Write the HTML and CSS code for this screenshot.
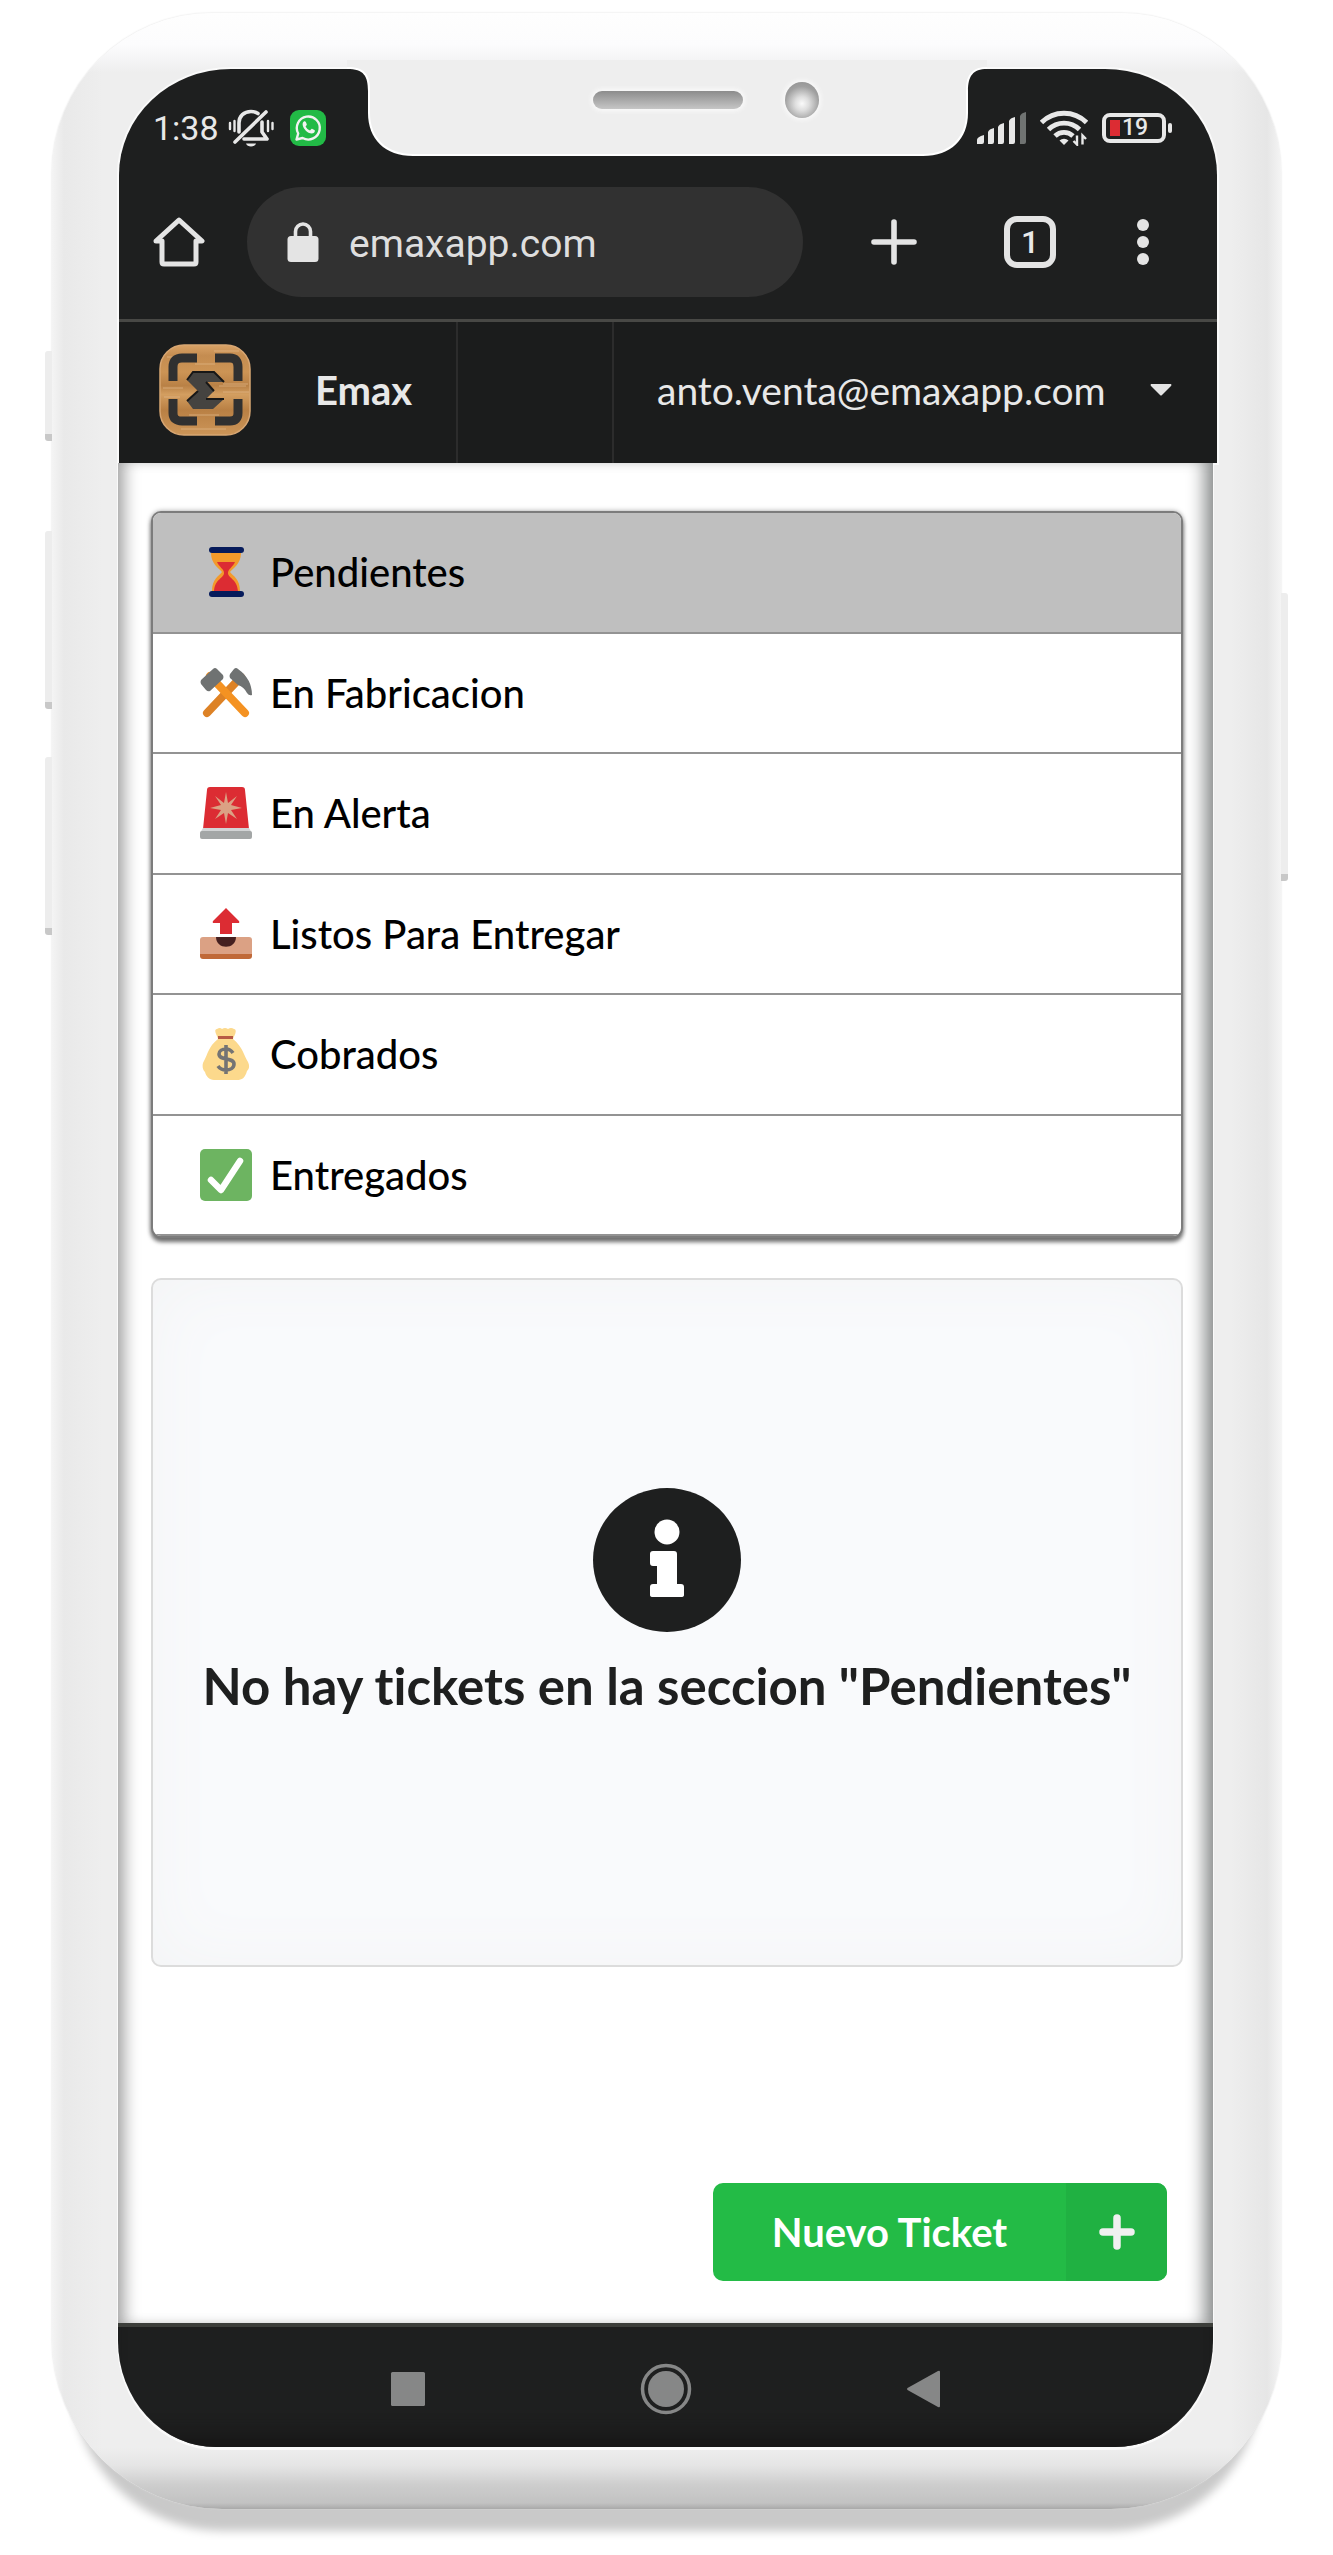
FILE: index.html
```html
<!DOCTYPE html>
<html lang="es">
<head>
<meta charset="utf-8">
<meta name="viewport" content="width=device-width, initial-scale=1">
<title>Emax</title>
<link rel="stylesheet" href="styles.css">
</head>
<body>
<div class="stage">
<div class="phone">
  <span class="side-key key-a"></span>
  <span class="side-key key-b"></span>
  <span class="side-key key-c"></span>
  <span class="side-key key-d"></span>
  <div class="screen">
    <div class="chrome">
      <div class="status">
        <div class="status-group">
          <span class="clock">1:38</span>
          <svg class="ic-bell" width="46" height="40" viewBox="0 0 46 40" fill="none" stroke="#e8e8e8" stroke-width="3.6" stroke-linecap="round" stroke-linejoin="round"><path d="M38 4 7 34"/><path d="M11 24V15C11 8 16 3.500 23 3.500c2.500 0 5 .6 7 2"/><path d="M34 14v10l5 7H16"/><path d="M2 15v6M6.500 13v10M40 13v10M44.500 15v6" stroke-width="2.400"/><path d="M18 35.500h10c-1 4-9 4-10 0z" fill="#e8e8e8" stroke="none"/></svg>
          <svg class="ic-wa" width="36" height="36" viewBox="0 0 36 36"><rect width="36" height="36" rx="9" fill="#22ba46"/><path d="M6.500 29.500l1.700-6A11.500 11.500 0 1 1 12.600 28z" fill="none" stroke="#f2f2f2" stroke-width="2.400" stroke-linejoin="round"/><path d="M13.600 11.800c.8-.8 1.800-.6 2.200.2l1 2.300c.2.600-.9 1.700-1.200 2.100 1 2 2.400 3.200 4.400 4.100.7-.6 1.300-1.900 2-1.700l2.400 1.200c.9.500.4 2-.4 2.700-2.200 1.900-6 .1-8.400-2.300-2.500-2.500-4.100-6.600-2-8.600z" fill="#f2f2f2"/></svg>
        </div>
        <div class="status-group">
          <svg width="50" height="32" viewBox="0 0 50 32" fill="#e8e8e8"><path d="M1 32v-4q0-3 7-5v7q0 2-2 2zM12 32V20q1-3 6-4v14q0 2-2 2zM22 32V15q1-3 6-4v19q0 2-2 2zM33 32V9q1-3 6-4v25q0 2-2 2z"/><path d="M44 32V4q1-3 6-4v30q0 2-2 2z" fill="#707372"/></svg>
          <svg class="ic-wifi" width="48" height="36" viewBox="0 0 48 36" fill="none" stroke="#e8e8e8" stroke-width="4.800"><path d="M1.500 12.500a32 32 0 0 1 45 0M8.500 19.500a22 22 0 0 1 31 0M15 26a13 13 0 0 1 18 0"/><path d="M24 35l-4.500-4.500a6.500 6.500 0 0 1 9 0z" fill="#e8e8e8" stroke="none"/><path d="M37 25.500v9l-3.500-3.500M42.500 34.500v-9l3.500 3.500" stroke-width="2.400"/></svg>
          <span class="battery"><span class="battery-fill"></span>19</span>
        </div>
      </div>
      <div class="browser">
        <button class="icon-btn" aria-label="Inicio"><svg width="52" height="52" viewBox="0 0 52 52" fill="none" stroke="#e4e4e4" stroke-width="5" stroke-linejoin="round" stroke-linecap="round"><path d="M3 25 26 4l23 21h-6v21q0 2-2 2H11q-2 0-2-2V25z"/></svg></button>
        <a class="address" href="#"><svg width="32" height="40" viewBox="0 0 32 40"><path d="M8.500 15V9.500a7.500 7.500 0 0 1 15 0V15" fill="none" stroke="#e4e4e4" stroke-width="3.600"/><rect x="0.500" y="14" width="31" height="26" rx="3.500" fill="#e4e4e4"/></svg><span>emaxapp.com</span></a>
        <button class="icon-btn new-tab" aria-label="Nueva pestaña"><svg width="46" height="46" viewBox="0 0 46 46" stroke="#e4e4e4" stroke-width="5.600" stroke-linecap="round"><path d="M23 3v40M3 23h40"/></svg></button>
        <button class="icon-btn tabs">1</button>
        <button class="icon-btn menu" aria-label="Menú"><svg width="12" height="46" viewBox="0 0 12 46" fill="#e4e4e4"><circle cx="6" cy="6" r="6"/><circle cx="6" cy="23" r="6"/><circle cx="6" cy="40" r="6"/></svg></button>
      </div>
      <nav class="appbar">
        <a class="brand" href="#">
          <svg width="92" height="92" viewBox="0 0 92 92"><defs><linearGradient id="wood" x1="0" y1="0" x2="0" y2="1"><stop offset="0" stop-color="#d9a266"/><stop offset=".12" stop-color="#c48c50"/><stop offset=".3" stop-color="#cc9455"/><stop offset=".45" stop-color="#b98146"/><stop offset=".55" stop-color="#d39e60"/><stop offset=".72" stop-color="#b98044"/><stop offset="1" stop-color="#cc9558"/></linearGradient></defs><rect x="1" y="1" width="90" height="90" rx="24" fill="url(#wood)" stroke="#d8a672" stroke-width="1.500"/><path d="M8 13h26M55 7h25M4 44h20M64 48h26M60 42h27M5 53h16M22 85h45M30 71h30M36 20h20M64 40h25" stroke="#e2b98a" stroke-width="1" opacity=".7"/><path d="M14 37V23q0-9 9-9h15M56 14h15q8 0 8 9v14M14 55v14q0 8 9 8h15M56 77h15q8 0 8-8V55" fill="none" stroke="#303030" stroke-width="9"/><path d="M34 28h21l10 10H47l8 9-8 8h18L54 65H34l-6-8 11-10-11-11z" fill="#454340"/><path d="M28 36l6-8h21l10 10M28 57l11-10M47 55h18M47 38l8 9" fill="none" stroke="#171717" stroke-width="2"/></svg>
          <span>Emax</span>
        </a>
        <span class="slot"></span>
        <button class="account"><span>anto.venta@emaxapp.com</span><svg width="22" height="12" viewBox="0 0 22 12"><path d="M1 0h20q1 1 0 2l-9 9q-1 1-2 0L1 2q-1-1 0-2z" fill="#e4e4e4"/></svg></button>
      </nav>
    </div>
    <div class="lower">
      <main class="page">
        <ul class="menu-list">
          <li><a class="item active" href="#"><svg viewBox="0 0 52 52"><path d="M11 7h30c0 11-8 15-11 19 3 4 10 7 10 19H12c0-12 7-15 10-19-3-4-11-8-11-19z" fill="#f39a2b"/><path d="M17 16h18c-2 5-7 7-7 11 0 5 9 6 10 18H14c1-12 10-13 10-18 0-4-5-6-7-11z" fill="#dc2c33"/><rect x="9" y="1" width="35" height="6" rx="3" fill="#061b5b"/><rect x="9" y="45" width="35" height="6" rx="3" fill="#061b5b"/></svg>Pendientes</a></li>
          <li><a class="item" href="#"><svg viewBox="0 0 52 52"><path d="M41 10 7 46" stroke="#dd8226" stroke-width="8" stroke-linecap="round"/><path d="M10 9 45 46" stroke="#f49222" stroke-width="8" stroke-linecap="round"/><path d="M13 2q2-2 4 0l6 6q1 2 0 4L10 24q-2 1-4-1l-5-6q-1-2 0-4zM34 2q2-2 4 0 14 10 14 26-3 1-5-2-3-6-9-8l-8-7q-1-2 0-4z" fill="#6f7272"/></svg>En Fabricacion</a></li>
          <li><a class="item" href="#"><svg viewBox="0 0 52 52"><path d="M10 0h32q3 0 3 3l4 39H3L7 3q0-3 3-3z" fill="#dc2c33"/><path d="m26 5 2 11 9-7-6 9 11 3-11 2 6 9-9-6-2 11-2-11-9 6 6-9-11-2 11-3-6-9 9 7z" fill="#dba184"/><path d="M3 41h46l3 5H0z" fill="#d2d4d5"/><rect y="44" width="52" height="8" rx="2" fill="#a3a6a6"/></svg>En Alerta</a></li>
          <li><a class="item" href="#"><svg viewBox="0 0 52 52"><path d="M26 0 39 13q1 2-1 2h-6v11H20V15h-6q-2 0-1-2z" fill="#dc2c33"/><path d="M3 29h46q3 0 3 3v15H0V32q0-3 3-3z" fill="#dba184"/><path d="M16 29h20c0 13-20 13-20 0z" fill="#452020"/><path d="M0 46h52v2q0 3-3 3H3q-3 0-3-3z" fill="#c06938"/></svg>Listos Para Entregar</a></li>
          <li><a class="item" href="#"><svg viewBox="0 0 52 52"><path d="M17 1q3-2 5 0 3-2 6 0 3-2 6 0c4 1 0 7-1 10 10 8 11 17 15 23 2 4 1 7-1 9-2 7-5 9-10 9H14c-5 0-8-4-9-8-3-3-3-8-1-11 4-7 4-14 14-22-1-4-5-9-1-10z" fill="#fcd98c"/><path d="M18 8h15v3H18z" fill="#b75a44"/><path d="M33 25c-2-3-4-4-7-4-4 0-7 2-7 5 0 7 15 3 15 10 0 4-4 6-8 6-3 0-6-1-8-4M26 17v29" fill="none" stroke="#747474" stroke-width="3.600"/></svg>Cobrados</a></li>
          <li><a class="item" href="#"><svg viewBox="0 0 52 52"><rect width="52" height="52" rx="5" fill="#6db461"/><path d="M11 31l10 10 19-29" fill="none" stroke="#fff" stroke-width="6.500" stroke-linecap="round" stroke-linejoin="round"/></svg>Entregados</a></li>
        </ul>
        <section class="empty">
          <svg width="148" height="144" viewBox="0 0 148 144"><ellipse cx="74" cy="72" rx="74" ry="72" fill="#1e1f1f"/><circle cx="74" cy="44" r="12.500" fill="#fff"/><path d="M60 63h21q3 0 3 3v30h4q3 0 3 3v8q0 2-3 2H60q-3 0-3-2v-8q0-3 3-3h4V78h-4q-3 0-3-3v-9q0-3 3-3z" fill="#fff"/></svg>
          <h1>No hay tickets en la seccion "Pendientes"</h1>
        </section>
        <button class="new-ticket"><span class="label">Nuevo Ticket</span><span class="plus"><svg width="36" height="36" viewBox="0 0 36 36" stroke="#f0f0f0" stroke-width="7.500" stroke-linecap="round"><path d="M18 4v28M4 18h28"/></svg></span></button>
      </main>
      <div class="sysnav">
        <button class="icon-btn" aria-label="Recientes"><svg width="52" height="52" viewBox="0 0 52 52"><rect x="9" y="9" width="34" height="34" rx="1.500" fill="#868787"/></svg></button>
        <button class="icon-btn" aria-label="Inicio"><svg width="52" height="52" viewBox="0 0 52 52"><circle cx="26" cy="26" r="23.500" fill="none" stroke="#868787" stroke-width="3.500"/><circle cx="26" cy="26" r="18" fill="#868787"/></svg></button>
        <button class="icon-btn" aria-label="Atrás"><svg width="52" height="52" viewBox="0 0 52 52"><path d="M9.500 25 40 8q2-1 2 1v34q0 2-2 1L9.500 27q-1-1 0-2z" fill="#868787"/></svg></button>
      </div>
    </div>
  </div>
  <div class="notch">
    <svg class="notch-shape" width="640" height="96" viewBox="0 0 640 96"><path d="M0 0V9c17 0 21 7 21 22v22c0 26 17 43 45 43h510c28 0 45-17 45-43V31c0-15 5-22 19-22V0z" fill="#fff"/><path d="M0 0V7c17 0 23 7 23 22v24c0 25 17 41 43 41h510c26 0 43-16 43-41V29c0-15 7-22 21-22V0z" fill="#eeeeee"/></svg>
    <span class="speaker"></span>
    <span class="camera"></span>
  </div>
</div>
</div>
</body>
</html>
```
FILE: styles.css
```css
* { box-sizing: border-box; }
body { margin: 0; background: #fff; font-family: Lato, "Liberation Sans", sans-serif; font-variant-ligatures: none; color: #000; }
button { border: 0; padding: 0; margin: 0; background: none; font: inherit; color: inherit; }
a { color: inherit; text-decoration: none; }
svg { display: block; flex: none; }

.stage { padding: 13px 52px 46px; overflow: hidden; }
.phone {
  position: relative;
  padding: 56px 64px 62px 67px;
  border-radius: 160px 160px 170px 170px;
  background:
    linear-gradient(to bottom, #fefefe 0, #fcfcfd 32px, rgba(238,238,238,0) 60px),
    linear-gradient(to top, #a9a9a9 0, #c2c2c2 6px, #cdcdcd 24px, rgba(226,226,226,.7) 44px, rgba(238,238,238,0) 62px),
    linear-gradient(to right, #f4f4f4 0, #e9e9e9 12px, #eeeeee 50px, #eeeeee calc(100% - 50px), #e6e6e6 calc(100% - 14px), #f4f4f4 100%);
  box-shadow: 0 0 2px #d8d8d8, 0 42px 10px -20px #c9c9c9;
}
.side-key { position: absolute; width: 7px; background: #ededed; border-bottom: 7px solid #c8c8c8; border-radius: 3px 0 0 3px; }
.key-a { left: -7px; top: 338px; height: 90px; }
.key-b { left: -7px; top: 518px; height: 178px; }
.key-c { left: -7px; top: 744px; height: 178px; }
.key-d { right: -7px; top: 580px; height: 288px; border-radius: 0 3px 3px 0; }

.chrome {
  overflow: hidden;
  border-radius: 112px 112px 0 0 / 106px 106px 0 0;
  background: #1e1f1f; color: #e8e8e8;
  box-shadow: 0 0 0 2px #fafafa;
}
.lower {
  overflow: hidden;
  margin: 0 4px 0 -1px;
  border-radius: 0 0 98px 98px / 0 0 106px 106px;
  box-shadow: 0 2px 0 1px #fafafa;
}
.status { display: flex; justify-content: space-between; align-items: center; height: 118px; padding: 0 43px 0 34px; }
.status-group { display: flex; align-items: center; }
.clock { font: 34px/40px Roboto, sans-serif; }
.ic-bell { margin-left: 9px; }
.ic-wa { margin-left: 16px; }
.ic-wifi { margin: 0 14px; }
.battery {
  position: relative;
  display: flex; align-items: center; gap: 2px;
  width: 64px; height: 30px; padding-left: 4px; margin-right: 8px;
  border: 4px solid #e8e8e8; border-radius: 8px;
  font: 500 23px/22px Roboto, sans-serif;
}
.battery::after { content: ""; position: absolute; right: -10px; top: 6px; width: 4px; height: 10px; background: #e8e8e8; border-radius: 2px; }
.battery-fill { width: 10px; height: 16px; background: #dc2c33; }

.browser { display: flex; align-items: center; height: 132px; padding: 0 68px 22px 34px; }
.icon-btn { display: flex; align-items: center; justify-content: center; flex: none; }
.address {
  display: flex; align-items: center; gap: 30px; flex: 1;
  height: 110px; margin: 0 68px 0 42px; padding-left: 40px;
  border-radius: 55px; background: #313131; color: #dedede;
  font: 39px/48px Roboto, sans-serif;
}
.address span { padding-top: 4px; }
.tabs {
  width: 52px; height: 52px; margin: 0 81px 0 87px;
  border: 6px solid #e4e4e4; border-radius: 13px;
  font: 500 32px/36px Roboto, sans-serif;
}

.appbar { display: flex; height: 144px; border-top: 3px solid #484845; background: #1b1c1c; }
.brand { display: flex; align-items: center; width: 339px; padding: 0 0 6px 40px; gap: 64px; font-size: 40px; font-weight: 700; line-height: 48px; border-right: 2px solid #2c2c2c; }
.slot { width: 156px; border-right: 2px solid #2c2c2c; }
.account { display: flex; align-items: center; justify-content: space-between; flex: 1; padding: 0 45px 6px 43px; font-size: 39px; line-height: 48px; }

.page {
  display: flex; flex-direction: column;
  padding: 48px 30px 42px 33px;
  background: #fff;
  box-shadow: inset 14px 0 16px -8px #a0a0a0, inset -18px 0 18px -10px #858888;
}
.menu-list {
  display: grid; grid-auto-rows: 1fr; height: 727px;
  list-style: none; margin: 0; padding: 0; overflow: hidden;
  border: 2px solid #7c7c7c; border-radius: 10px;
  box-shadow: 0 4px 4px #707070, 0 0 5px #a8a8a8;
  background: #fff;
}
.menu-list li { border-bottom: 2px solid #939393; }
.item { display: flex; align-items: center; gap: 18px; height: 100%; padding-left: 47px; font-family: "Lato Medium", Lato, sans-serif; font-weight: 500; font-size: 40px; line-height: 48px; }
.item svg { width: 52px; height: 52px; }
.active { background: #bfbfbf; }
.empty {
  display: flex; flex-direction: column; align-items: center; justify-content: center; gap: 24px;
  height: 689px; margin-top: 40px; padding-bottom: 42px;
  border: 2px solid #dcdcdc; border-radius: 10px;
  background: #f9fafc;
  box-shadow: inset 0 0 70px #f3f4f5;
}
.empty h1 { margin: 0; font-size: 51px; line-height: 60px; font-weight: 700; color: #1e1f1f; white-space: nowrap; }
.new-ticket {
  display: flex; align-self: flex-end; overflow: hidden;
  width: 454px; height: 98px; margin: 216px 16px 0 0;
  border-radius: 10px; background: #23bb46; color: #fff;
  font-size: 40px; line-height: 48px; font-weight: 700;
}
.label { flex: 1; display: flex; align-items: center; justify-content: center; }
.plus { display: flex; align-items: center; justify-content: center; width: 101px; background: #20b142; }
.sysnav {
  display: flex; justify-content: center; align-items: flex-start; gap: 206px;
  height: 124px; padding-top: 36px;
  border-top: 4px solid #3c3e3a; background: #1e1f1f;
  box-shadow: inset 0 -24px 18px -12px #171717;
}

.notch { position: absolute; left: 50%; top: 47px; width: 640px; height: 96px; transform: translateX(-50%); }
.notch-shape { width: 100%; }
.speaker { position: absolute; left: 246px; top: 31px; width: 150px; height: 18px; border-radius: 9px; background: linear-gradient(#8c8c8c, #c6c6c6); box-shadow: 0 0 4px 2px #fafafa; }
.camera { position: absolute; left: 438px; top: 22px; width: 34px; height: 36px; border-radius: 50%; background: radial-gradient(circle at 50% 60%, #fafafa 0, #dedede 25%, #a0a0a0 62%, #8c8c8c 100%); box-shadow: 0 0 4px 2px #fafafa; }
```
